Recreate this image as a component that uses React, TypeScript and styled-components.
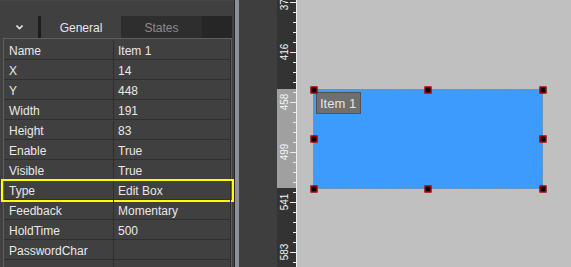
import React from 'react';
import styled, { createGlobalStyle } from 'styled-components';

const GlobalStyle = createGlobalStyle`
  html, body {
    margin: 0;
    padding: 0;
    background: #404040;
  }
  body {
    font-family: "Liberation Sans", Arial, sans-serif;
  }
`;

const Screen = styled.div`
  display: flex;
  width: 571px;
  height: 267px;
  overflow: hidden;
`;

const PropsPanel = styled.div`
  width: 234px;
  flex-shrink: 0;
  background: #404040;
  display: flex;
  flex-direction: column;
  padding-top: 15px;
  box-sizing: border-box;
  border-top: 1px solid #474747;
`;

const TabBar = styled.div`
  display: flex;
  flex-shrink: 0;
  height: 22px;
  width: 232px;
`;

const MenuButton = styled.div`
  width: 38px;
  display: flex;
  align-items: center;
  justify-content: center;
  border-right: 3px solid #1c1c1c;
`;

const Tab = styled.div<{ active?: boolean }>`
  width: ${(p) => (p.active ? 80 : 81)}px;
  display: flex;
  align-items: center;
  justify-content: center;
  padding-top: 1px;
  font-size: 12px;
  color: ${(p) => (p.active ? '#e6e6e6' : '#8c8c8c')};
  background: ${(p) => (p.active ? '#404040' : '#2e2e2e')};
`;

const TabFiller = styled.div`
  flex: 1;
  background: #262626;
`;

const Grid = styled.div`
  margin-left: 3px;
  width: 229px;
  box-sizing: border-box;
  border: 1px solid #5e5e5e;
  border-bottom: none;
  padding-top: 1px;
  flex: 1;
  min-height: 0;
`;

const Row = styled.div`
  position: relative;
  display: grid;
  grid-template-columns: 110px 1fr;
  height: 20px;
  box-sizing: border-box;
  border-bottom: 1px solid #2f2f2f;
  font-size: 12px;
  color: #e8e8e8;
`;

const Cell = styled.div<{ value?: boolean }>`
  display: flex;
  align-items: center;
  padding-left: ${(p) => (p.value ? 4 : 5)}px;
  padding-top: 3px;
  border-right: 1px solid #2f2f2f;
  white-space: nowrap;
  overflow: hidden;
`;

const Highlight = styled.div`
  position: absolute;
  left: -3px;
  right: -3px;
  top: -1px;
  bottom: -3px;
  border: 2px solid #ffff00;
  pointer-events: none;
`;

const Splitter = styled.div`
  width: 5px;
  flex-shrink: 0;
  border-left: 1px solid #2a2a2a;
  background: #8b909a;
  box-sizing: border-box;
`;

const SidePanel = styled.div`
  width: 38px;
  flex-shrink: 0;
  background: #3e3e3e;
`;

const RulerBox = styled.div`
  width: 20px;
  flex-shrink: 0;
  background: #333333;
`;

const Canvas = styled.div`
  position: relative;
  flex: 1;
  background: #c0c0c0;
`;

const Widget = styled.div`
  position: absolute;
  background: #3d9bfe;
  border: 1px dashed #8e8e8e;
  box-sizing: border-box;
`;

const NameTag = styled.div`
  position: absolute;
  left: 2px;
  top: 2px;
  height: 22px;
  padding: 1px 4px 0 3px;
  display: flex;
  align-items: center;
  background: #6f6f6f;
  border: 1px solid #525252;
  box-sizing: border-box;
  color: #e4e4e4;
  font-size: 13px;
`;

const Handle = styled.div`
  position: absolute;
  width: 7px;
  height: 7px;
  background: #000;
  border: 1px solid #ff0000;
  box-sizing: border-box;
  transform: translate(-50%, -50%);
`;

const rows: [string, string][] = [
  ['Name', 'Item 1'],
  ['X', '14'],
  ['Y', '448'],
  ['Width', '191'],
  ['Height', '83'],
  ['Enable', 'True'],
  ['Visible', 'True'],
  ['Type', 'Edit Box'],
  ['Feedback', 'Momentary'],
  ['HoldTime', '500'],
  ['PasswordChar', ''],
  ['', ''],
];

const sel = { x: 16, y: 89, w: 230, h: 100 };

const Ruler: React.FC<{ from: number; to: number }> = ({ from, to }) => {
  const ticks = [];
  for (let k = 0; k < 27; k++) {
    const y = 2.5 + k * 10;
    const major = k % 5 === 0;
    ticks.push(<line key={k} x1={major ? 13 : 16} x2={19} y1={y} y2={y} stroke="#e8e8e8" strokeWidth={1} />);
  }
  const labels = ['374', '416', '458', '499', '541', '583'];
  return (
    <RulerBox>
      <svg width="20" height="267">
        <rect x="0" y={from} width="19" height={to - from} fill="#a0a0a0" />
        <line x1="19.5" x2="19.5" y1="0" y2="267" stroke="#f0f0f0" />
        {ticks}
        {labels.map((l, i) => (
          <text
            key={l}
            x={0}
            y={0}
            transform={`translate(10.5 ${2 + i * 50}) rotate(-90)`}
            fill="#f4f4f4"
            fontSize="10"
            fontFamily="Liberation Sans, Arial, sans-serif"
            textAnchor="middle"
          >
            {l}
          </text>
        ))}
      </svg>
    </RulerBox>
  );
};

const Chevron = () => (
  <svg width="7" height="5" viewBox="0 0 7 5">
    <polyline points="0.5,0.5 3.5,3.5 6.5,0.5" fill="none" stroke="#e0e0e0" strokeWidth="1.6" />
  </svg>
);

export default function App() {
  const handles = [
    [0, 0], [0.5, 0], [1, 0],
    [0, 0.5], [1, 0.5],
    [0, 1], [0.5, 1], [1, 1],
  ];
  return (
    <Screen>
      <GlobalStyle />
      <PropsPanel>
        <TabBar>
          <MenuButton>
            <Chevron />
          </MenuButton>
          <Tab active>General</Tab>
          <Tab>States</Tab>
          <TabFiller />
        </TabBar>
        <Grid>
          {rows.map(([k, v], i) => (
            <Row key={i}>
              <Cell>{k}</Cell>
              <Cell value>{v}</Cell>
              {k === 'Type' && <Highlight />}
            </Row>
          ))}
        </Grid>
      </PropsPanel>
      <Splitter />
      <SidePanel />
      <Ruler from={sel.y} to={sel.y + sel.h - 1} />
      <Canvas>
        <Widget style={{ left: sel.x, top: sel.y, width: sel.w, height: sel.h }}>
          <NameTag>Item 1</NameTag>
        </Widget>
        {handles.map(([fx, fy], i) => (
          <Handle
            key={i}
            style={{ left: sel.x + 0.5 + fx * (sel.w - 1), top: sel.y + 0.5 + fy * (sel.h - 1) }}
          />
        ))}
      </Canvas>
    </Screen>
  );
}
